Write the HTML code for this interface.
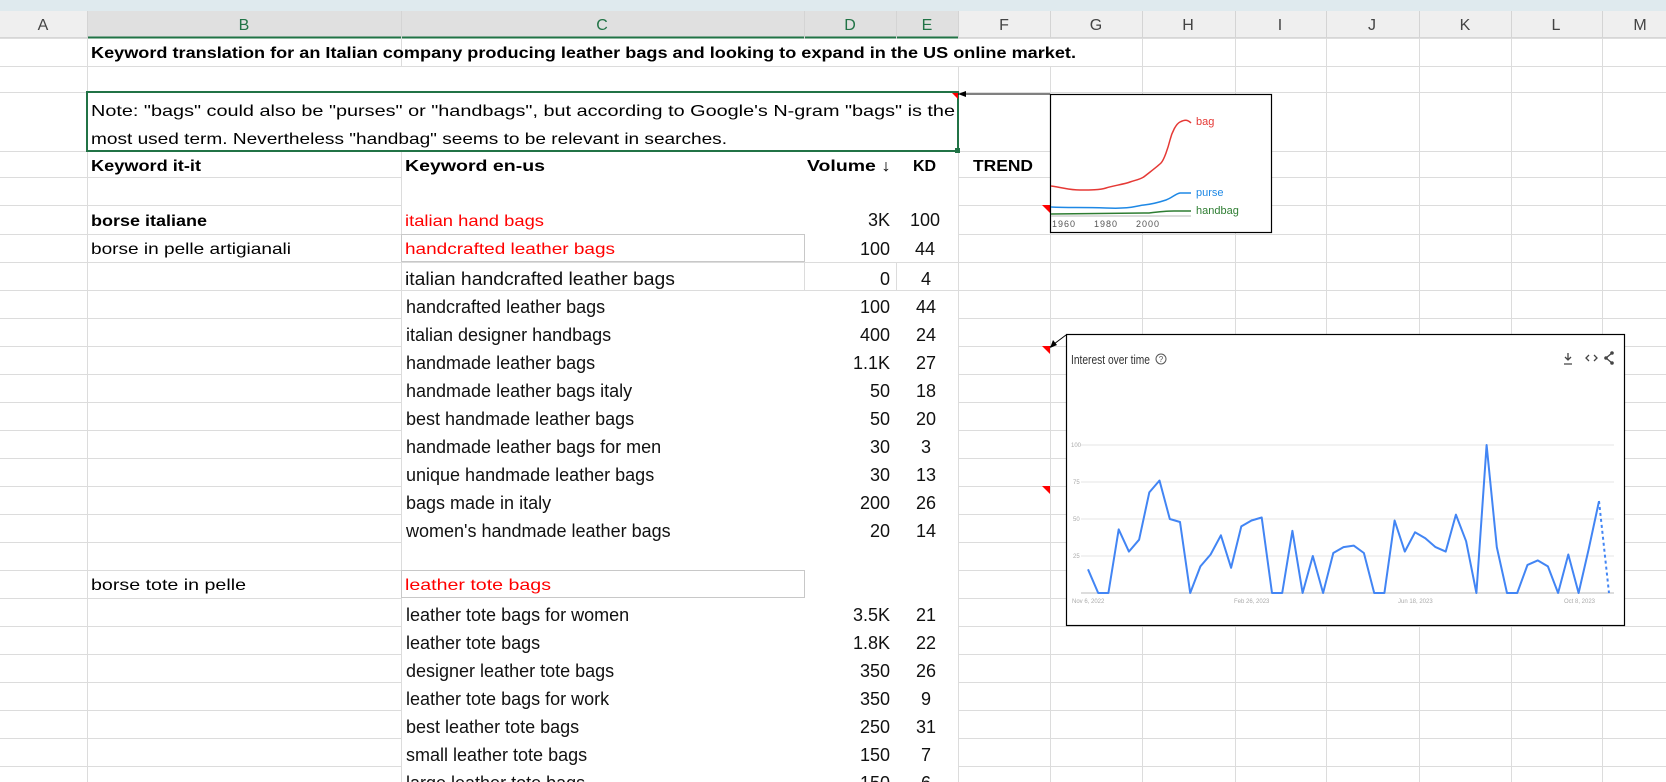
<!DOCTYPE html>
<html><head><meta charset="utf-8"><style>
html,body{margin:0;padding:0;background:#fff;width:1666px;height:782px;overflow:hidden}
svg{display:block;font-family:"Liberation Sans",sans-serif}
</style></head><body>
<svg width="1666" height="782" viewBox="0 0 1666 782" xmlns="http://www.w3.org/2000/svg">
<rect x="0" y="0" width="1666" height="11" fill="#dfeaee"/>
<rect x="0" y="11" width="1666" height="27" fill="#efefef"/>
<rect x="87" y="11" width="871" height="27" fill="#e0e0e0"/>
<line x1="0" y1="38" x2="1666" y2="38" stroke="#bdbdbd"/>
<line x1="87" y1="37.5" x2="958" y2="37.5" stroke="#217346" stroke-width="2"/>
<g stroke="#d4d4d4" stroke-width="1">
<line x1="87.5" y1="11" x2="87.5" y2="38"/><line x1="401.5" y1="11" x2="401.5" y2="38"/><line x1="804.5" y1="11" x2="804.5" y2="38"/><line x1="896.5" y1="11" x2="896.5" y2="38"/><line x1="958.5" y1="11" x2="958.5" y2="38"/><line x1="1050.5" y1="11" x2="1050.5" y2="38"/><line x1="1142.5" y1="11" x2="1142.5" y2="38"/><line x1="1235.5" y1="11" x2="1235.5" y2="38"/><line x1="1326.5" y1="11" x2="1326.5" y2="38"/><line x1="1419.5" y1="11" x2="1419.5" y2="38"/><line x1="1511.5" y1="11" x2="1511.5" y2="38"/><line x1="1602.5" y1="11" x2="1602.5" y2="38"/>
</g>
<g font-size="16" text-anchor="middle" fill="#444">
<text x="43" y="30">A</text><text x="244" y="30" fill="#217346">B</text><text x="602" y="30" fill="#217346">C</text><text x="850" y="30" fill="#217346">D</text><text x="927" y="30" fill="#217346">E</text><text x="1004" y="30">F</text><text x="1096" y="30">G</text><text x="1188" y="30">H</text><text x="1280" y="30">I</text><text x="1372" y="30">J</text><text x="1465" y="30">K</text><text x="1556" y="30">L</text><text x="1640" y="30">M</text>
</g>
<!-- grid -->
<g stroke="#dcdcdc" stroke-width="1">
<line x1="0" y1="66.5" x2="1666" y2="66.5"/><line x1="0" y1="92.5" x2="1666" y2="92.5"/><line x1="0" y1="151.5" x2="1666" y2="151.5"/><line x1="0" y1="177.5" x2="1666" y2="177.5"/><line x1="0" y1="205.5" x2="1666" y2="205.5"/><line x1="0" y1="234.5" x2="1666" y2="234.5"/><line x1="0" y1="262.5" x2="1666" y2="262.5"/>
<line x1="0" y1="290.5" x2="1666" y2="290.5"/>
<line x1="0" y1="318.5" x2="1666" y2="318.5"/>
<line x1="0" y1="346.5" x2="1666" y2="346.5"/>
<line x1="0" y1="374.5" x2="1666" y2="374.5"/>
<line x1="0" y1="402.5" x2="1666" y2="402.5"/>
<line x1="0" y1="430.5" x2="1666" y2="430.5"/>
<line x1="0" y1="458.5" x2="1666" y2="458.5"/>
<line x1="0" y1="486.5" x2="1666" y2="486.5"/>
<line x1="0" y1="514.5" x2="1666" y2="514.5"/>
<line x1="0" y1="542.5" x2="1666" y2="542.5"/><line x1="0" y1="570.5" x2="1666" y2="570.5"/>
<line x1="0" y1="598.5" x2="1666" y2="598.5"/>
<line x1="0" y1="626.5" x2="1666" y2="626.5"/>
<line x1="0" y1="654.5" x2="1666" y2="654.5"/>
<line x1="0" y1="682.5" x2="1666" y2="682.5"/>
<line x1="0" y1="710.5" x2="1666" y2="710.5"/>
<line x1="0" y1="738.5" x2="1666" y2="738.5"/>
<line x1="0" y1="766.5" x2="1666" y2="766.5"/>
<line x1="87.5" y1="38" x2="87.5" y2="782"/><line x1="401.5" y1="38" x2="401.5" y2="782"/><line x1="804.5" y1="38" x2="804.5" y2="290"/><line x1="896.5" y1="38" x2="896.5" y2="290"/><line x1="958.5" y1="38" x2="958.5" y2="782"/><line x1="1050.5" y1="38" x2="1050.5" y2="782"/><line x1="1142.5" y1="38" x2="1142.5" y2="782"/><line x1="1235.5" y1="38" x2="1235.5" y2="782"/><line x1="1326.5" y1="38" x2="1326.5" y2="782"/><line x1="1419.5" y1="38" x2="1419.5" y2="782"/><line x1="1511.5" y1="38" x2="1511.5" y2="782"/><line x1="1602.5" y1="38" x2="1602.5" y2="782"/>
</g>
<rect x="402" y="39" width="740" height="27" fill="#fff"/>
<rect x="401" y="67" width="557" height="25" fill="#fff"/>
<rect x="88" y="93" width="870" height="58" fill="#fff"/>
<rect x="402" y="152" width="556" height="110" fill="#fff"/>
<rect x="402" y="291" width="556" height="491" fill="#fff"/>
<line x1="804.5" y1="262" x2="804.5" y2="290" stroke="#dcdcdc"/>
<line x1="896.5" y1="262" x2="896.5" y2="290" stroke="#dcdcdc"/>
<rect x="401.5" y="234.5" width="403" height="27" fill="#fff" stroke="#c8c8c8"/>
<rect x="401.5" y="570.5" width="403" height="27" fill="#fff" stroke="#c8c8c8"/>
<rect x="87" y="92" width="871" height="59" fill="none" stroke="#217346" stroke-width="2"/>
<rect x="955" y="148" width="5" height="5" fill="#217346"/>
<g font-size="16" fill="#000">
<text x="91" y="58" font-weight="bold" textLength="985" lengthAdjust="spacingAndGlyphs">Keyword translation for an Italian company producing leather bags and looking to expand in the US online market.</text>
<text x="91" y="116" textLength="864" lengthAdjust="spacingAndGlyphs">Note: "bags" could also be "purses" or "handbags", but according to Google's N-gram "bags" is the</text>
<text x="91" y="144" textLength="636" lengthAdjust="spacingAndGlyphs">most used term. Nevertheless "handbag" seems to be relevant in searches.</text>
<text x="91" y="171" font-weight="bold" textLength="110" lengthAdjust="spacingAndGlyphs">Keyword it-it</text>
<text x="405" y="171" font-weight="bold" textLength="140" lengthAdjust="spacingAndGlyphs">Keyword en-us</text>
<text x="807" y="171" font-weight="bold" textLength="84" lengthAdjust="spacingAndGlyphs">Volume ↓</text>
<text x="913" y="171" font-weight="bold">KD</text>
<text x="973" y="171" font-weight="bold" textLength="60" lengthAdjust="spacingAndGlyphs">TREND</text>
<text x="91" y="226" font-weight="bold" textLength="116" lengthAdjust="spacingAndGlyphs">borse italiane</text>
<text x="405" y="226" fill="#f00" textLength="139" lengthAdjust="spacingAndGlyphs">italian hand bags</text>
<text x="91" y="254" textLength="200" lengthAdjust="spacingAndGlyphs">borse in pelle artigianali</text>
<text x="405" y="254" fill="#f00" textLength="210" lengthAdjust="spacingAndGlyphs">handcrafted leather bags</text>
<text x="91" y="590" textLength="155" lengthAdjust="spacingAndGlyphs">borse tote in pelle</text>
<text x="405" y="590" fill="#f00" textLength="146" lengthAdjust="spacingAndGlyphs">leather tote bags</text>
</g>
<g font-size="18" fill="#111">
<text x="890" y="226" text-anchor="end">3K</text><text x="925" y="226" text-anchor="middle">100</text>
<text x="890" y="255" text-anchor="end">100</text><text x="925" y="255" text-anchor="middle">44</text>
<text x="405" y="285" textLength="270" lengthAdjust="spacingAndGlyphs">italian handcrafted leather bags</text>
<text x="406" y="313">handcrafted leather bags</text>
<text x="406" y="341">italian designer handbags</text>
<text x="406" y="369">handmade leather bags</text>
<text x="406" y="397">handmade leather bags italy</text>
<text x="406" y="425">best handmade leather bags</text>
<text x="406" y="453">handmade leather bags for men</text>
<text x="406" y="481">unique handmade leather bags</text>
<text x="406" y="509">bags made in italy</text>
<text x="406" y="537">women's handmade leather bags</text>
<text x="406" y="621">leather tote bags for women</text>
<text x="406" y="649">leather tote bags</text>
<text x="406" y="677">designer leather tote bags</text>
<text x="406" y="705">leather tote bags for work</text>
<text x="406" y="733">best leather tote bags</text>
<text x="406" y="761">small leather tote bags</text>
<text x="406" y="789">large leather tote bags</text>
</g>
<g font-size="18" fill="#111" text-anchor="end">
<text x="890" y="285">0</text><text x="890" y="313">100</text><text x="890" y="341">400</text><text x="890" y="369">1.1K</text><text x="890" y="397">50</text><text x="890" y="425">50</text><text x="890" y="453">30</text><text x="890" y="481">30</text><text x="890" y="509">200</text><text x="890" y="537">20</text>
<text x="890" y="621">3.5K</text><text x="890" y="649">1.8K</text><text x="890" y="677">350</text><text x="890" y="705">350</text><text x="890" y="733">250</text><text x="890" y="761">150</text><text x="890" y="789">150</text>
</g>
<g font-size="18" fill="#111" text-anchor="middle">
<text x="926" y="285">4</text><text x="926" y="313">44</text><text x="926" y="341">24</text><text x="926" y="369">27</text><text x="926" y="397">18</text><text x="926" y="425">20</text><text x="926" y="453">3</text><text x="926" y="481">13</text><text x="926" y="509">26</text><text x="926" y="537">14</text>
<text x="926" y="621">21</text><text x="926" y="649">22</text><text x="926" y="677">26</text><text x="926" y="705">9</text><text x="926" y="733">31</text><text x="926" y="761">7</text><text x="926" y="789">6</text>
</g>
<!-- comment indicators -->
<g fill="#f00">
<polygon points="952,93 958,93 958,99"/>
<polygon points="1042,205 1050,205 1050,213"/>
<polygon points="1042,346 1050,346 1050,354"/>
<polygon points="1042,486 1050,486 1050,494"/>
</g>
<!-- arrows -->
<line x1="958" y1="94" x2="1050" y2="94" stroke="#000" stroke-width="1"/>
<polygon points="958,94 966,91 966,97" fill="#000"/>
<line x1="1066" y1="335" x2="1050" y2="347" stroke="#000"/>
<polygon points="1050,348 1053,340 1057,345" fill="#000"/>
<!-- ngram chart -->
<rect x="1050.5" y="94.5" width="221" height="138" fill="#fff" stroke="#000" stroke-width="1.2"/>
<line x1="1051" y1="216" x2="1191" y2="216" stroke="#bbb"/>
<path d="M1051,186 C1065,188 1070,190 1080,190 S1100,190 1106,188 S1125,184 1130,182 S1140,180 1145,176 S1158,166 1161,163 S1168,148 1170,140 S1176,124 1180,122 S1187,119 1191,123" fill="none" stroke="#e53935" stroke-width="1.5"/>
<path d="M1051,207 C1070,208 1080,207 1106,208 S1135,206 1144,205 S1160,202 1166,200 S1175,194 1180,193 L1191,193" fill="none" stroke="#1e88e5" stroke-width="1.5"/>
<path d="M1051,214 L1149,213 S1165,211 1174,211 L1191,211" fill="none" stroke="#2e7d32" stroke-width="1.5"/>
<g font-size="11">
<text x="1196" y="125" fill="#e53935">bag</text>
<text x="1196" y="196" fill="#1e88e5">purse</text>
<text x="1196" y="214" fill="#2e7d32">handbag</text>
</g>
<g font-size="9" fill="#555" letter-spacing="1"><text x="1052" y="227">1960</text><text x="1094" y="227">1980</text><text x="1136" y="227">2000</text></g>
<!-- trends chart -->
<rect x="1066.5" y="334.5" width="558" height="291" fill="#fff" stroke="#000" stroke-width="1.2"/>
<text x="1071" y="364" font-size="13" fill="#333" textLength="79" lengthAdjust="spacingAndGlyphs">Interest over time</text>
<circle cx="1161" cy="359" r="5" fill="none" stroke="#555" stroke-width="1"/>
<text x="1161" y="362" font-size="8" fill="#555" text-anchor="middle">?</text>
<g stroke="#444" stroke-width="1.3" fill="none">
<path d="M1568,353 v7 M1565,357 l3,3 l3,-3 M1564,364 h8"/>
<path d="M1589,355 l-3,3 l3,3 M1594,355 l3,3 l-3,3"/>
<path d="M1612,353 l-6,5 l6,5"/>
</g>
<g fill="#444"><circle cx="1612" cy="353" r="1.8"/><circle cx="1606" cy="358" r="1.8"/><circle cx="1612" cy="363" r="1.8"/></g>
<g stroke="#e6e6e6" stroke-width="1">
<line x1="1081" y1="445" x2="1614" y2="445"/><line x1="1081" y1="482" x2="1614" y2="482"/><line x1="1081" y1="519" x2="1614" y2="519"/><line x1="1081" y1="556" x2="1614" y2="556"/>
</g>
<line x1="1081" y1="593" x2="1614" y2="593" stroke="#bbb"/>
<g font-size="6" fill="#aaa">
<text x="1071" y="447">100</text><text x="1073" y="484">75</text><text x="1073" y="521">50</text><text x="1073" y="558">25</text>
<text x="1072" y="603">Nov 6, 2022</text><text x="1234" y="603">Feb 26, 2023</text><text x="1398" y="603">Jun 18, 2023</text><text x="1564" y="603">Oct 8, 2023</text>
</g>
<polyline fill="none" stroke="#4285f4" stroke-width="2" stroke-linejoin="round" points="1088.0,569.3 1098.2,593.0 1108.4,593.0 1118.7,529.4 1128.9,551.6 1139.1,539.7 1149.3,492.4 1159.5,480.5 1169.8,519.0 1180.0,522.0 1190.2,593.0 1200.4,566.4 1210.6,554.5 1220.9,535.3 1231.1,567.8 1241.3,526.4 1251.5,520.5 1261.7,517.5 1272.0,593.0 1282.2,593.0 1292.4,530.8 1302.6,593.0 1312.8,556.0 1323.1,593.0 1333.3,553.0 1343.5,547.1 1353.7,545.6 1363.9,553.0 1374.2,593.0 1384.4,593.0 1394.6,520.5 1404.8,551.6 1415.0,532.3 1425.3,538.2 1435.5,547.1 1445.7,551.6 1455.9,514.6 1466.1,541.2 1476.4,593.0 1486.6,445.0 1496.8,547.1 1507.0,593.0 1517.2,593.0 1527.5,564.9 1537.7,560.4 1547.9,566.4 1558.1,593.0 1568.3,554.5 1578.6,593.0 1588.8,548.6 1599.0,501.2"/>
<line x1="1599" y1="501" x2="1609" y2="593" stroke="#4285f4" stroke-width="2" stroke-dasharray="3,3"/>
</svg>
</body></html>
